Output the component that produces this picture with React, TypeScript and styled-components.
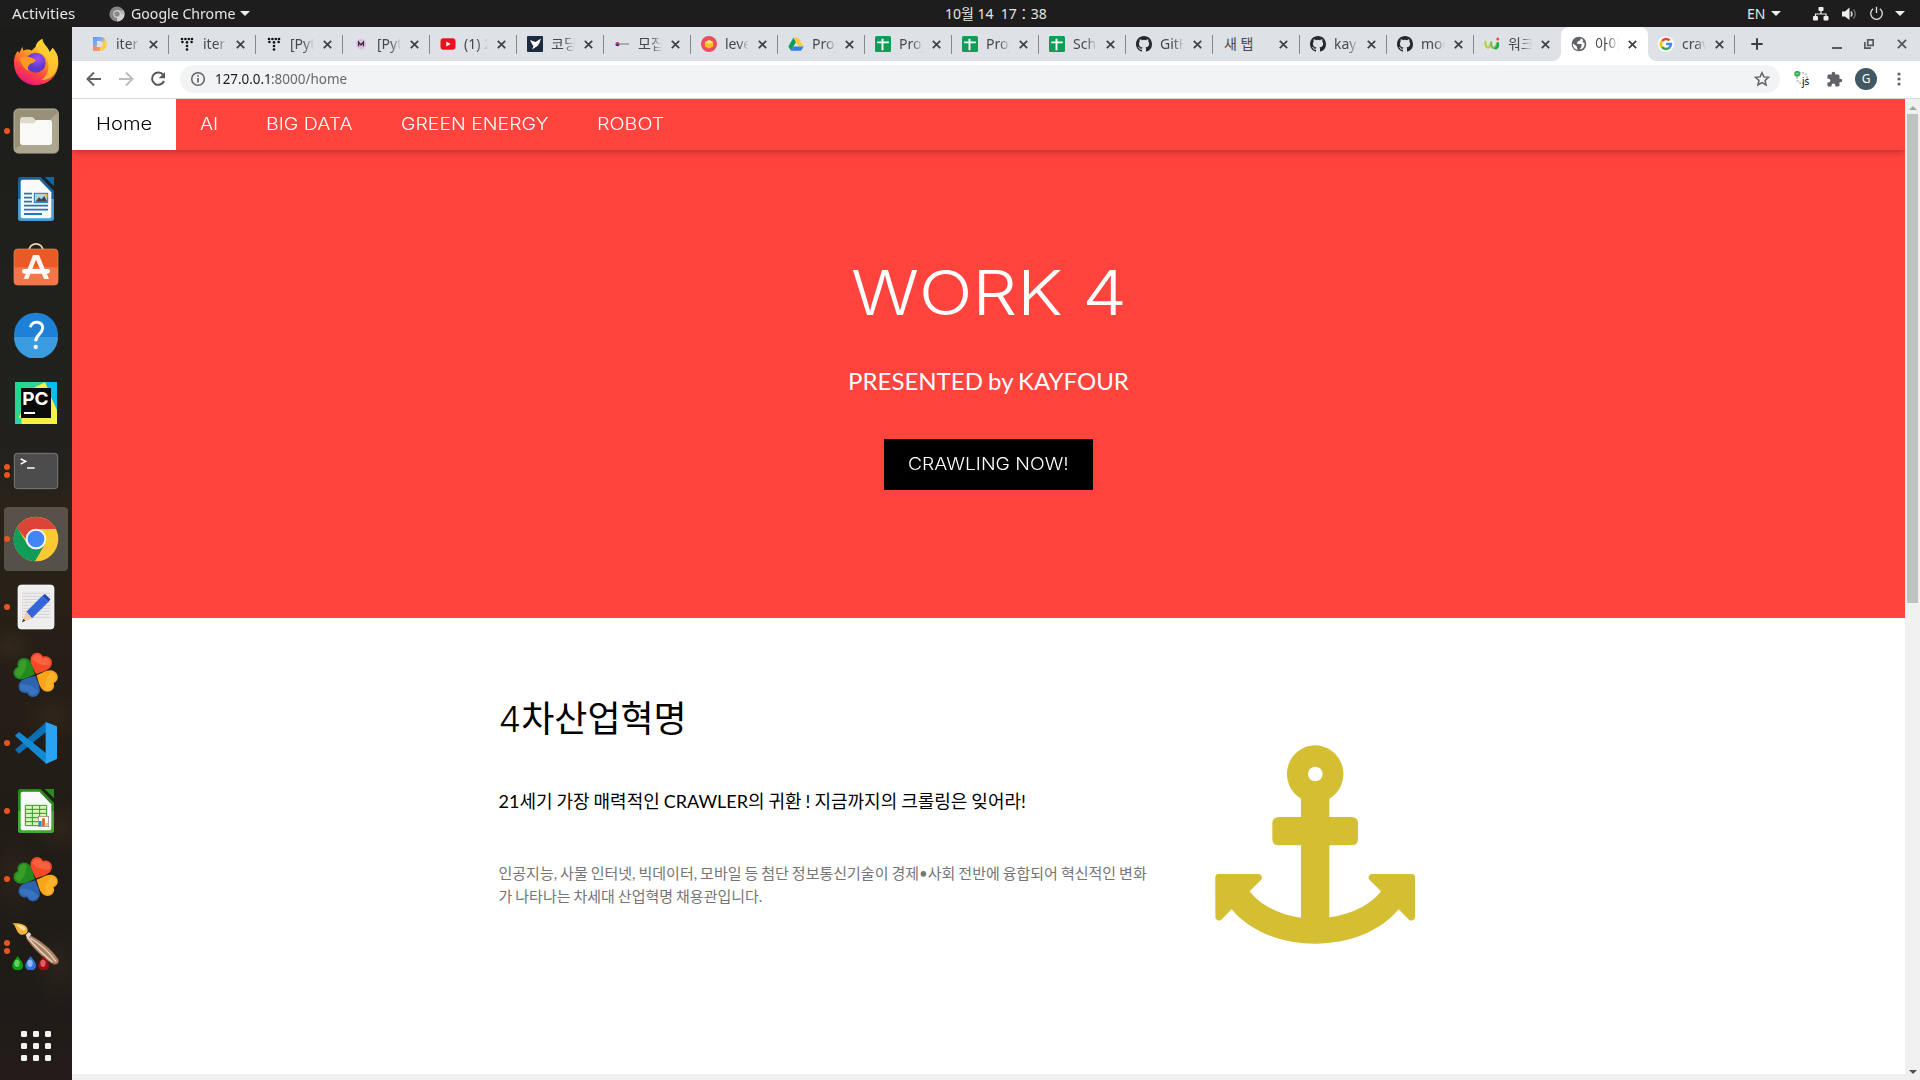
import React, { useLayoutEffect, useRef, useState } from 'react';
import styled, { createGlobalStyle, css } from 'styled-components';

const uiFont = '"Noto Sans", "Open Sans", "Noto Sans CJK KR", sans-serif';
const headFont = 'Inter, "Noto Sans CJK KR", sans-serif';
const bodyFont = 'Lato, "Noto Sans CJK KR", sans-serif';

const GlobalStyle = createGlobalStyle`
  *, *::before, *::after { box-sizing: border-box; }
  body { margin: 0; overflow: hidden; background: #1d1d1d; }
  svg { display: block; flex: none; }
`;

/* ---------- text that keeps a fixed measure ---------- */

const FitBox = styled.span<{ $w: number }>`
  display: inline-block;
  width: ${(p) => p.$w}px;
  white-space: pre;
  text-align: left;
`;
const FitInner = styled.span`
  display: inline-block;
  transform-origin: 0 50%;
`;

function Fit({ w, children }: { w: number; children: React.ReactNode }) {
  const ref = useRef<HTMLSpanElement>(null);
  const [scale, setScale] = useState(1);
  useLayoutEffect(() => {
    if (ref.current) setScale(w / ref.current.offsetWidth);
  }, [w]);
  return (
    <FitBox $w={w}>
      <FitInner ref={ref} style={{ transform: `scaleX(${scale})` }}>{children}</FitInner>
    </FitBox>
  );
}

/* ---------- desktop shell ---------- */

const Desktop = styled.div`
  width: 1920px;
  height: 1080px;
  display: flex;
  flex-direction: column;
  overflow: hidden;
  font-family: ${uiFont};
`;
const TopBar = styled.header`
  height: 27px;
  flex: none;
  display: grid;
  grid-template-columns: 945px 1fr 173px;
  background: #1d1d1d;
  color: #e6e6e6;
  font-size: 14px;
  line-height: 27px;
`;
const TopGroup = styled.div<{ $pad?: number }>`
  display: flex;
  align-items: center;
  padding-left: ${(p) => p.$pad ?? 0}px;
`;
const Gap = styled.span<{ $w: number }>`
  width: ${(p) => p.$w}px;
  flex: none;
`;
const Caret = styled.i`
  border: 5px solid transparent;
  border-top-color: #eee;
  border-bottom: 0;
  width: 10px;
  height: 5px;
`;
const Work = styled.div`
  flex: 1;
  display: flex;
  min-height: 0;
`;
const Dock = styled.aside`
  width: 72px;
  flex: none;
  display: flex;
  flex-direction: column;
  padding-top: 1px;
  background:
    radial-gradient(ellipse 30px 24px at 52px 690px, rgba(88, 66, 40, 0.22), transparent),
    radial-gradient(ellipse 26px 20px at 10px 620px, rgba(92, 70, 45, 0.22), transparent),
    radial-gradient(ellipse 34px 30px at 60px 800px, rgba(70, 54, 36, 0.35), transparent),
    radial-gradient(ellipse 30px 50px at 14px 850px, rgba(66, 50, 34, 0.3), transparent),
    radial-gradient(ellipse 30px 40px at 60px 940px, rgba(66, 52, 38, 0.3), transparent),
    linear-gradient(#1c1c1b 0, #20201c 250px, #22211d 430px, #2a231a 480px, #261f17 620px, #211c16 800px, #1f1b17 960px, #241c1a 100%);
`;
const DockSlot = styled.div<{ $last?: boolean }>`
  height: 68px;
  flex: none;
  padding: 3px 4px 1px;
  ${(p) => p.$last && css`margin-top: 32px;`}
`;
const DockTile = styled.div<{ $active?: boolean }>`
  height: 64px;
  border-radius: 4px;
  display: flex;
  align-items: center;
  padding-bottom: 2px;
  background: ${(p) => (p.$active ? 'rgba(255,255,255,.21)' : 'transparent')};
`;
const Dots = styled.div`
  width: 8px;
  display: flex;
  flex-direction: column;
  gap: 2.5px;
  padding-top: 2px;
`;
const Dot = styled.i`
  width: 6px;
  height: 6px;
  border-radius: 50%;
  background: #e95420;
`;

/* ---------- browser chrome ---------- */

const Browser = styled.div`
  flex: 1;
  min-width: 0;
  display: flex;
  flex-direction: column;
  background: #fff;
`;
const TabStrip = styled.div`
  height: 34px;
  flex: none;
  display: flex;
  padding-left: 10px;
  background: #dee1e6;
  color: #45494d;
`;
const Tab = styled.div<{ $active?: boolean; $bare?: boolean; $sep?: boolean }>`
  width: 87px;
  flex: none;
  display: flex;
  align-items: center;
  padding-left: ${(p) => (p.$bare ? 11 : 10)}px;
  position: relative;
  ${(p) => p.$sep && css`
    background: linear-gradient(#85888d, #85888d) 86px 8px / 1px 19px no-repeat;
  `}
  ${(p) => p.$active && css`
    background: #fff;
    border-radius: 8px 8px 0 0;
    &::before, &::after {
      content: '';
      position: absolute;
      bottom: 0;
      width: 8px;
      height: 8px;
    }
    &::before { left: -8px; background: radial-gradient(circle at 0 0, transparent 7.5px, #fff 8px); }
    &::after { right: -8px; background: radial-gradient(circle at 100% 0, transparent 7.5px, #fff 8px); }
  `}
`;
const TabTitle = styled.span<{ $wide?: boolean }>`
  width: ${(p) => (p.$wide ? 46 : 24)}px;
  margin-left: ${(p) => (p.$wide ? 0 : 8)}px;
  overflow: hidden;
  white-space: nowrap;
  font-size: 14px;
  line-height: 24px;
  ${(p) => !p.$wide && css`mask-image: linear-gradient(90deg, #000 55%, transparent);`}
`;
const TabClose = styled.span`
  margin-left: 8.5px;
`;
const StripButtons = styled.div`
  display: flex;
  align-items: center;
  padding-left: 16px;
`;
const Toolbar = styled.div`
  height: 38px;
  flex: none;
  display: flex;
  align-items: center;
  padding: 0 13px 1px 13px;
  border-bottom: 1px solid #d6d8db;
  background: #fff;
`;
const Omnibox = styled.div`
  width: 1600px;
  height: 28px;
  margin-left: 13px;
  border-radius: 14px;
  background: #f1f3f4;
  display: flex;
  align-items: center;
  padding: 0 9px;
  font-size: 14px;
  line-height: 28px;
  color: #202124;
`;
const UrlRest = styled.span`
  color: #65696e;
`;
const Push = styled.span`
  flex: 1;
`;
const Avatar = styled.div`
  width: 22px;
  height: 22px;
  border-radius: 50%;
  background: #405965;
  color: #fff;
  font-size: 12px;
  line-height: 22px;
  text-align: center;
`;

/* ---------- page ---------- */

const Viewport = styled.div`
  flex: 1;
  min-height: 0;
  display: flex;
  align-items: flex-start;
  background: #f0f0f0;
`;
const Page = styled.main`
  width: 1833px;
  height: 975px;
  flex: none;
  background: #fff;
  overflow: hidden;
  font-family: ${bodyFont};
  font-size: 15px;
  line-height: 1.5;
  color: #000;
`;
const Scrollbar = styled.div`
  width: 15px;
  height: 981px;
  flex: none;
  display: flex;
  flex-direction: column;
  align-items: center;
  padding-top: 7px;
  background: #f0f0f0;
`;
const ArrowUp = styled.i`
  border: 4px solid transparent;
  border-bottom-color: #a3a3a3;
  border-top: 0;
`;
const ArrowDown = styled.i`
  border: 4px solid transparent;
  border-top-color: #505050;
  border-bottom: 0;
  margin-top: auto;
  margin-bottom: 6px;
`;
const Thumb = styled.div`
  width: 11px;
  height: 489px;
  margin-top: 4px;
  background: #c1c1c1;
`;
const Nav = styled.nav`
  height: 51px;
  display: flex;
  position: relative;
  background: #ff443e;
  box-shadow: 0 2px 5px rgba(0, 0, 0, 0.16), 0 2px 10px rgba(0, 0, 0, 0.12);
`;
const NavItem = styled.a<{ $current?: boolean }>`
  padding: 11px 24px 13px;
  font-family: ${headFont};
  font-size: 17.3px;
  line-height: 27px;
  height: 51px;
  color: ${(p) => (p.$current ? '#000' : '#fff')};
  background: ${(p) => (p.$current ? '#fff' : 'transparent')};
  font-weight: 350;
`;
const Hero = styled.section`
  height: 468px;
  padding-top: 95px;
  background: #ff443e;
  color: #fff;
  text-align: center;
`;
const HeroTitle = styled.h1`
  margin: 0 0 22px;
  font: 350 62px/96px ${headFont};
`;
const HeroLead = styled.p`
  margin: 0 0 40px;
  font-size: 24px;
  line-height: 36px;
  word-spacing: -1px;
`;
const HeroButton = styled.button`
  display: inline-block;
  height: 51px;
  width: 209px;
  padding: 11px 24px 13px;
  border: 0;
  background: #000;
  color: #fff;
  font: 350 17.3px/27px ${headFont};
`;
const Section = styled.section`
  padding: 64px 0;
`;
const Content = styled.div`
  width: 980px;
  margin: 0 auto;
  display: flex;
`;
const Article = styled.div`
  width: 653px;
`;
const Title = styled.h1`
  margin: 10px 0;
  font: 400 36px/54px ${headFont};
`;
const TitleDigit = styled.span`
  font-weight: 300;
`;
const Subtitle = styled.h5`
  margin: 10px 0 15px;
  padding: 32px 0;
  font-weight: 400;
  font-size: 18px;
  line-height: 27px;
  word-spacing: -0.65px;
`;
const Summary = styled.p`
  margin: 0;
  color: #757575;
  word-spacing: -0.85px;
`;
const Figure = styled.div`
  flex: 1;
  padding: 63px 0 0 63.5px;
`;

/* ---------- icons ---------- */

const Cross = ({ size = 9, color = '#3c4043' }) => (
  <svg width={size} height={size} viewBox="0 0 9 9" fill="none" stroke={color} strokeWidth="1.7"><path d="M.8.8l7.4 7.4M8.2.8L.8 8.2" /></svg>
);

const Tistory = () => (
  <svg width="16" height="16" viewBox="0 0 16 16" fill="#111">
    {[[3, 3], [6.4, 3], [9.8, 3], [13, 3], [3.4, 6], [8, 6.4], [12.6, 6], [8, 10], [8, 13.5]].map(([x, y]) => <circle key={`${x}-${y}`} cx={x} cy={y} r="1.3" />)}
  </svg>
);
const Sheets = () => (
  <svg width="16" height="16" viewBox="0 0 16 16"><rect width="16" height="16" rx="1.5" fill="#0f9d58" /><path d="M7.5 2.7v11.5M2.2 6.4h11.6" stroke="#fff" strokeWidth="1.9" /></svg>
);
const Github = () => (
  <svg width="16" height="16" viewBox="0 0 16 16" fill="#24292e"><path d="M8 0C3.58 0 0 3.58 0 8c0 3.54 2.29 6.53 5.47 7.59.4.07.55-.17.55-.38 0-.19-.01-.82-.01-1.49-2.01.37-2.53-.49-2.69-.94-.09-.23-.48-.94-.82-1.13-.28-.15-.68-.52-.01-.53.63-.01 1.08.58 1.23.82.72 1.21 1.87.87 2.33.66.07-.52.28-.87.51-1.07-1.78-.2-3.64-.89-3.64-3.95 0-.87.31-1.59.82-2.15-.08-.2-.36-1.02.08-2.12 0 0 .67-.21 2.2.82a7.6 7.6 0 014 0c1.53-1.04 2.2-.82 2.2-.82.44 1.1.16 1.92.08 2.12.51.56.82 1.27.82 2.15 0 3.07-1.87 3.75-3.65 3.95.29.25.54.73.54 1.48 0 1.07-.01 1.93-.01 2.2 0 .21.15.46.55.38A8.01 8.01 0 0016 8c0-4.42-3.58-8-8-8z" /></svg>
);

const favicons: Record<string, React.ReactNode> = {
  d: <svg width="16" height="16" viewBox="0 0 16 16"><defs><linearGradient id="dg" x2="1" y2="1"><stop stopColor="#4f9cf5" /><stop offset=".4" stopColor="#8fa8e8" /><stop offset=".6" stopColor="#ffcf4a" /><stop offset="1" stopColor="#f3d33c" /></linearGradient></defs><path d="M1 1h7c9 0 9 14 0 14H1l4-4h3c3.500 0 3.500-6 0-6H5v6l-4 4z" fill="url(#dg)" /><path d="M1 15V9l4 2h3v4z" fill="#f68a5c" opacity=".8" /></svg>,
  t: <Tistory />,
  m: <svg width="16" height="16" viewBox="0 0 16 16"><circle cx="8" cy="8" r="5.2" fill="#e0bce5" /><path d="M5.600 10.200V6L8 9l2.400-3v4.200" fill="none" stroke="#333" strokeWidth="1.300" /></svg>,
  yt: <svg width="16" height="16" viewBox="0 0 16 16"><rect x=".5" y="2.300" width="15" height="11.400" rx="3" fill="#f00f1e" /><path d="M6.300 5.500v5L10.600 8z" fill="#fff" /></svg>,
  code: <svg width="16" height="16" viewBox="0 0 16 16"><rect width="16" height="16" rx="1" fill="#1c2b40" /><path d="M3 4l4 1.500 1.500.5L14 2.500 12.500 7l-2 3L5 13.500 6.500 10 5 8z" fill="#fff" /></svg>,
  flag: <svg width="16" height="16" viewBox="0 0 16 16"><circle cx="3.500" cy="8" r="2" fill="#c8345b" /><path d="M1.500 8a2 2 0 004 .5z" fill="#2a3d8f" /><path d="M5 8h10" stroke="#888" strokeWidth="1.200" /></svg>,
  lv: <svg width="16" height="16" viewBox="0 0 16 16"><circle cx="8" cy="8" r="8" fill="#ec4c62" /><path d="M3.800 6.200L8 4l4.200 2v4.500L8 12.500l-4.200-2z" fill="#ffbe1f" /><path d="M3.800 6.200L8 4l4.200 2L8 8z" fill="#ffe28a" /></svg>,
  drive: <svg width="16" height="16" viewBox="0 0 16 16"><path d="M5.500 1.500L.3 10.600 3 14.800 8 6z" fill="#0f9d58" /><path d="M5.500 1.500h5l5.200 9h-5z" fill="#ffcd40" /><path d="M5.500 10.500h10.200L13 14.800H3z" fill="#2f80ed" /></svg>,
  s: <Sheets />,
  gh: <Github />,
  wi: <svg width="16" height="16" viewBox="0 0 18 16" fill="none" strokeLinecap="round" strokeWidth="2.500"><path d="M1.500 5.500C2 14 6 14 8 6.500" stroke="#b3d335" /><path d="M8 6.500C8 14 13 14 15 7.500" stroke="#7ac143" /><path d="M15.500 7c.8 3 0 5-2.500 6" stroke="#16a551" /><circle cx="15.500" cy="2.300" r="1.700" fill="#f04e30" /></svg>,
  globe: <svg width="16" height="16" viewBox="0 0 16 16"><circle cx="8" cy="8" r="7.300" fill="#5f6368" /><path d="M9.500 2c1 2-1 3-3 3.500L6 8h4.500v2.500L8.700 13.500C12 13 14 10.500 13.500 7l-2-1 .8-2zM1.900 7.500L5.500 10l1.200 3.800C3.500 13 1.500 11 1.900 7.500z" fill="#fff" /></svg>,
  g: <svg width="16" height="16" viewBox="0 0 16 16"><circle cx="8" cy="8" r="8" fill="#fff" /><g fill="none" strokeWidth="2.500"><path d="M4 4.900A5 5 0 0111.600 4.400" stroke="#ea4335" /><path d="M4 4.900a5 5 0 000 6.200" stroke="#fbbc05" /><path d="M4 11.100a5 5 0 007.400.6" stroke="#34a853" /><path d="M11.400 11.700A5 5 0 0013 8.100H8.200" stroke="#4285f4" /></g></svg>,
};

const tabs: { icon?: string; title: string; active?: boolean }[] = [
  { icon: 'd', title: 'iter' }, { icon: 't', title: 'iter' }, { icon: 't', title: '[Pyt' }, { icon: 'm', title: '[Pyt' },
  { icon: 'yt', title: '(1) 2' }, { icon: 'code', title: '코딩' }, { icon: 'flag', title: '모집' }, { icon: 'lv', title: 'leve' },
  { icon: 'drive', title: 'Proj' }, { icon: 's', title: 'Proj' }, { icon: 's', title: 'Proj' }, { icon: 's', title: 'Sch' },
  { icon: 'gh', title: 'GitH' }, { title: '새 탭' }, { icon: 'gh', title: 'kay' }, { icon: 'gh', title: 'moo' },
  { icon: 'wi', title: '워크' }, { icon: 'globe', title: '아이', active: true }, { icon: 'g', title: 'craw' },
];

const Clover = ({ cy }: { cy: number }) => (
  <g transform={`translate(107 ${cy}) scale(.97)`}>
    {[['#f5492a', '#ff8a63', 22], ['#f9a51a', '#ffc84d', 114], ['#2c62ae', '#4c8fdc', 206], ['#238a1d', '#5bb83f', 295]].map(([a, b, r]) => (
      <g key={r} transform={`rotate(${r})`}>
        <path d="M0 -3C-14 -16 -35 -29 -34 -47C-33 -64 -14 -74 0 -61C14 -74 33 -64 34 -47C35 -29 14 -16 0 -3Z" fill={a as string} />
        <path d="M-29 -42C-29 -62 -12 -67 0 -55C12 -67 29 -60 29 -46C12 -34 -10 -34 -29 -42Z" fill={b as string} opacity=".4" />
      </g>
    ))}
  </g>
);

const DocShape = ({ y, dark, light }: { y: number; dark: string; light: string }) => (
  <>
    <path d={`M62 ${y}H122L162 ${y + 42}V${y + 124}Q162 ${y + 132} 153 ${y + 132}H62Q54 ${y + 132} 54 ${y + 124}V${y + 8}Q54 ${y} 62 ${y}Z`} fill={dark} />
    <path d={`M54 ${y + 66}H162V${y + 124}Q162 ${y + 132} 153 ${y + 132}H62Q54 ${y + 132} 54 ${y + 124}Z`} fill={light} />
    <path d={`M68 ${y + 8}H118L154 ${y + 46}V${y + 118}Q154 ${y + 124} 148 ${y + 124}H68Q62 ${y + 124} 62 ${y + 118}V${y + 14}Q62 ${y + 8} 68 ${y + 8}Z`} fill="#fafafa" />
    <path d={`M134 ${y}H162V${y + 28}Z`} fill={dark} />
  </>
);

type AppEntry = { cy: number; dots: number; active?: boolean; art: React.ReactNode };
const apps: AppEntry[] = [
  { cy: 126, dots: 0, art: (
    <>
      <defs>
        <linearGradient id="ff" x1=".8" y1="0" x2=".3" y2="1"><stop stopColor="#fff44f" /><stop offset=".4" stopColor="#ffa321" /><stop offset=".7" stopColor="#ff4b3e" /><stop offset="1" stopColor="#e8127c" /></linearGradient>
        <radialGradient id="fp" cx=".6" cy=".3"><stop stopColor="#a44cf5" /><stop offset="1" stopColor="#5b3bc4" /></radialGradient>
      </defs>
      <path d="M42 128C42 108 50 96 54 93L58 99L67 80L70 92C77 88 88 87 94 92L107 80C110 66 120 60 127 57C130 76 145 80 149 97L158 84C169 96 176 110 175 129C174 168 145 195 108 195C72 195 42 168 42 128Z" fill="url(#ff)" />
      <path d="M127 57C130 76 145 80 149 97L158 84C169 96 176 110 174 133C169 165 148 181 123 180C143 168 150 145 143 122C138 104 114 96 107 82C110 67 120 60 127 57Z" fill="#ffce2f" opacity=".8" />
      <circle cx="107" cy="128" r="30" fill="url(#fp)" />
      <path d="M58 116C70 107 89 110 103 117C110 122 105 128 91 131C83 138 82 145 86 153C68 146 65 127 58 116Z" fill="#ff9922" />
    </>) },
  { cy: 330, dots: 1, art: (
    <>
      <rect x="42" y="267" width="133" height="132" rx="13" fill="#999078" stroke="#bcb6a1" strokeWidth="3" />
      <path d="M43 390L173 278V388Q173 397 163 397H53Q43 397 43 390Z" fill="#aea78f" />
      <path d="M60 300Q60 291 68 291H96Q101 291 106 300H148Q156 300 156 309V325H60Z" fill="#ddd9cb" />
      <path d="M60 310H101L110 300H148Q156 300 156 309V367Q156 375 148 375H68Q60 375 60 367Z" fill="#f9f9f8" />
    </>) },
  { cy: 534, dots: 0, art: (
    <>
      <DocShape y={471} dark="#19639b" light="#449ed1" />
      <path d="M72 521H96M72 533H96M72 545H96M72 557H144M72 569H144M72 582H126" stroke="#1c7ab8" strokeWidth="5.500" />
      <rect x="103" y="520" width="40" height="28" fill="#a7d7ef" stroke="#1c7ab8" strokeWidth="3" />
      <path d="M106 545L117 532L124 538L133 528L142 545Z" fill="#454545" /><path d="M131 522H142V533Z" fill="#ffb72b" />
    </>) },
  { cy: 738, dots: 0, art: (
    <>
      <path d="M87 694C87 664 129 664 129 694" fill="none" stroke="#e9d7a6" strokeWidth="5" />
      <rect x="42" y="687" width="132" height="108" rx="11" fill="#ea5a26" stroke="#f4885c" strokeWidth="2" />
      <path d="M42 742H174V786Q174 795 164 795H52Q42 795 42 786Z" fill="#f2764a" />
      <path d="M99 705H117L147 777H132L108 719L85 777H71Z" fill="#fff5ee" /><rect x="66" y="747" width="84" height="14" rx="7" fill="#fff" />
    </>) },
  { cy: 942, dots: 0, art: (
    <>
      <circle cx="108" cy="944" r="66" fill="#1f80d8" /><path d="M42 951H174A66 66 0 0142 951Z" fill="#3c9ce2" />
      <path d="M91 922C95 899 131 904 128 925C126 942 107 944 107 964" fill="none" stroke="#fff" strokeWidth="9" /><circle cx="107" cy="981" r="6.500" fill="#fff" />
    </>) },
  { cy: 126, dots: 0, art: (
    <>
      <defs><linearGradient id="pc"><stop stopColor="#22d88f" /><stop offset=".5" stopColor="#35d394" /><stop offset="1" stopColor="#16bde6" /></linearGradient></defs>
      <rect x="45" y="66" width="126" height="126" fill="url(#pc)" /><path d="M45 192L105 82L135 66L171 148V192Z" fill="#f5f04a" /><path d="M138 66H171V150L146 96Z" fill="#08bfe9" /><path d="M45 170L64 174V192H45Z" fill="#25d7a0" />
      <rect x="63" y="84" width="90" height="90" fill="#0b0b0b" />
      <text x="67" y="135" fontFamily="Inter, sans-serif" fontWeight="700" fontSize="54" textLength="79" lengthAdjust="spacingAndGlyphs" fill="#fff">PC</text><rect x="72" y="156" width="33" height="6" fill="#fff" />
    </>) },
  { cy: 330, dots: 2, art: (
    <>
      <rect x="43" y="280" width="130" height="106" rx="9" fill="#4c4c4c" stroke="#7b7b7b" strokeWidth="3" />
      <path d="M62 297L77 304L62 312" fill="none" stroke="#fff" strokeWidth="4.500" /><path d="M81 324H104" stroke="#fff" strokeWidth="4.500" />
    </>) },
  { cy: 534, dots: 1, active: true, art: (
    <>
      <circle cx="108" cy="537" r="67" fill="#fcc934" />
      <path d="M50 504A67 67 0 01168 507H108A30 30 0 0078 537Z" fill="#db4437" />
      <path d="M51 502A67 67 0 00105 604L135 552A31 31 0 0181 552Z" fill="#0f9d58" />
      <circle cx="108" cy="537" r="31" fill="#f1f3f6" /><circle cx="108" cy="537" r="25" fill="#4285f4" />
    </>) },
  { cy: 738, dots: 1, art: (
    <>
      <rect x="54" y="675" width="108" height="132" rx="10" fill="#eee" stroke="#fff" strokeWidth="2" />
      <path d="M66 700H151M66 709H151M66 718H151M66 727H151M66 736H151M66 745H151M66 754H151M66 763H151M66 772H151" stroke="#c5c5c5" strokeWidth="2" />
      <path d="M127 707L135 702L151 718L145 726Z" fill="#1c46bd" /><path d="M127 707L145 726L96 775L79 755Z" fill="#3566d8" /><path d="M79 755L96 775L67 786Z" fill="#f2c9a5" /><path d="M70 776L76 782L66 787Z" fill="#333" />
    </>) },
  { cy: 942, dots: 0, art: <Clover cy={945} /> },
  { cy: 96, dots: 1, art: (
    <>
      <path d="M45 119L57 131L139 65V36Z" fill="#0a6fb5" /><path d="M45 77L57 66L139 130V162Z" fill="#1389d6" />
      <path d="M137 36L171 49V147L137 162Z" fill="#29a4f2" />
    </>) },
  { cy: 300, dots: 1, art: (
    <>
      <DocShape y={237} dark="#2b8a1d" light="#43a832" />
      <rect x="76" y="286" width="64" height="61" fill="#d4f7c0" /><path d="M76 286H140V347H76ZM97 286V347M119 286V347M76 298H140M76 310H140M76 323H140M76 335H140" fill="none" stroke="#2d9a20" strokeWidth="3" />
      <rect x="115" y="319" width="31" height="31" fill="#fff" stroke="#777" strokeWidth="2" /><path d="M121 348V333" stroke="#168fd6" strokeWidth="8" /><path d="M130.500 348V325" stroke="#d8621a" strokeWidth="8" /><path d="M140 348V339" stroke="#fcc336" strokeWidth="7" />
    </>) },
  { cy: 504, dots: 1, art: <Clover cy={508} /> },
  { cy: 708, dots: 2, art: (
    <>
      <path d="M84 673C112 684 155 716 175 748C181 763 165 768 151 758C126 742 91 705 78 684Z" fill="#a98467" stroke="#5a3b28" strokeWidth="2" />
      <path d="M90 684C118 700 148 726 168 755M84 684C105 708 130 735 158 756" fill="none" stroke="#e6d4c2" strokeWidth="4" />
      <path d="M77 675L86 666L94 673L83 687Z" fill="#ded5cd" /><path d="M37 639C58 640 75 641 82 655C86 670 76 676 63 674C48 668 49 648 37 639Z" fill="#f3b340" /><path d="M48 644C62 644 76 648 76 660C66 664 59 652 48 644Z" fill="#fce1a0" />
      {[['#0f9b18', '#8ef07f', 53], ['#3471db', '#c2e0ff', 92], ['#a00a12', '#ff8d8d', 131]].map(([a, b, x]) => (
        <g key={x} transform={`translate(${x} 738)`}><path d="M0 0C4 8 16 17 16 29C16 48 -16 48 -16 29C-16 17 -4 8 0 0Z" fill={a as string} /><ellipse cx="-2" cy="22" rx="8" ry="11" fill={b as string} opacity=".65" /></g>
      ))}
    </>) },
];

const GridArt = () => (
  <>{[963, 999, 1035].map((y) => [63, 99, 135].map((x) => <rect key={`${x}-${y}`} x={x} y={y} width="18" height="18" rx="4" fill="#f2f2f2" />))}</>
);

const DockIcon = ({ cy, children }: { cy: number; children: React.ReactNode }) => (
  <svg width="48" height="48" viewBox={`36 ${cy - 72} 144 144`}>{children}</svg>
);

const Anchor = () => (
  <svg width="200" height="200" viewBox="75 75 600 600" fill="#d4be32">
    <path fillRule="evenodd" d="M376 76A86 86 0 01418 236V291H484Q504 291 504 311V356Q504 376 484 376H418V592C482 584 542 555 573 514L539 480C532 473 537 462 546 462H665Q675 462 675 472V591C675 600 664 605 657 599L626 568C570 636 474 671 375 671C276 671 181 636 125 568L94 599C87 605 76 600 76 591V472Q76 462 86 462H205C215 462 219 473 213 480L179 514C210 555 269 585 333 593V376H267Q247 376 247 356V311Q247 291 267 291H333V236A86 86 0 01376 76ZM376 140A22 22 0 10376 184A22 22 0 10376 140Z" />
  </svg>
);

/* ---------- screen ---------- */

const menu: [string, number][] = [['Home', 56], ['AI', 18], ['BIG DATA', 87], ['GREEN ENERGY', 147.5], ['ROBOT', 67.5]];

export default function App() {
  return (
    <Desktop>
      <GlobalStyle />
      <TopBar>
        <TopGroup $pad={12}>
          <Fit w={63}>Activities</Fit>
          <Gap $w={34} />
          <svg width="16" height="16" viewBox="0 0 16 16"><circle cx="8" cy="8" r="7.600" fill="#858585" /><path d="M8 8h7.600A7.600 7.600 0 018 15.600z" fill="#cfcfcf" /><path d="M8 4.600h6.800a7.600 7.600 0 01.8 3.400H8z" fill="#b5b5b5" /><circle cx="8" cy="8" r="3.700" fill="#ddd" /><circle cx="8" cy="8" r="2.700" fill="#888" /></svg>
          <Gap $w={6} />
          <Fit w={104}>Google Chrome</Fit>
          <Gap $w={5} />
          <Caret />
        </TopGroup>
        <TopGroup><Fit w={102}>10월 14  17：38</Fit></TopGroup>
        <TopGroup>
          <Fit w={18}>EN</Fit>
          <Gap $w={6} />
          <Caret />
          <Gap $w={32} />
          <svg width="16" height="14" viewBox="0 0 16 14" fill="#eee"><rect x="5.500" width="5" height="4" rx=".7" /><rect y="9" width="5" height="4.500" rx="1" /><rect x="10.500" y="9" width="5" height="4.500" rx="1" /><path d="M8 3v4M2.500 9.500V7h10.500v2.500" fill="none" stroke="#eee" strokeWidth="1.200" /></svg>
          <Gap $w={13} />
          <svg width="16" height="14" viewBox="0 0 16 14"><path d="M0 4.500h3L7.500.5v12.500L3 9.500H0z" fill="#eee" /><path d="M9 4.500q1.800 2.500 0 5" fill="none" stroke="#ddd" strokeWidth="1.500" /><path d="M11.500 2.500q3.500 4.500 0 9" fill="none" stroke="#777" strokeWidth="1.300" /></svg>
          <Gap $w={11} />
          <svg width="15" height="15" viewBox="0 0 15 15" fill="none" stroke="#e6e6e6" strokeWidth="1.300"><path d="M4.200 2.800a5.800 5.800 0 106.600 0M7.500.8V7" /></svg>
          <Gap $w={11} />
          <Caret />
        </TopGroup>
      </TopBar>
      <Work>
        <Dock>
          {apps.map((a, i) => (
            <DockSlot key={i}>
              <DockTile $active={a.active}>
                <Dots>{Array.from({ length: a.dots }, (_, k) => <Dot key={k} />)}</Dots>
                <DockIcon cy={a.cy}>{a.art}</DockIcon>
              </DockTile>
            </DockSlot>
          ))}
          <DockSlot $last>
            <DockTile><Dots /><DockIcon cy={1008}><GridArt /></DockIcon></DockTile>
          </DockSlot>
        </Dock>
        <Browser>
          <TabStrip>
            {tabs.map((t, i) => (
              <Tab key={i} $active={t.active} $bare={!t.icon} $sep={!t.active && i !== 16}>
                {t.icon && favicons[t.icon]}
                <TabTitle $wide={!t.icon}>{t.title}</TabTitle>
                <TabClose><Cross /></TabClose>
              </Tab>
            ))}
            <StripButtons>
              <svg width="12" height="12" viewBox="0 0 12 12" stroke="#3c4043" strokeWidth="2"><path d="M6 .3v11.400M.3 6h11.400" /></svg>
              <Gap $w={69} />
              <svg width="10" height="10" viewBox="0 0 10 10"><path d="M0 9h10" stroke="#55595e" strokeWidth="2" /></svg>
              <Gap $w={22} />
              <svg width="10" height="10" viewBox="0 0 10 10" fill="none" stroke="#55595e" strokeWidth="1.700"><path d="M3.700.8h5.500v5.500H3.700zM.8 3v6.200H7" /></svg>
              <Gap $w={23} />
              <Cross size={10} color="#55595e" />
            </StripButtons>
          </TabStrip>
          <Toolbar>
            <svg width="18" height="18" viewBox="0 0 18 18" fill="none" stroke="#5f6368" strokeWidth="2"><path d="M16 9H3M9 2.500L2.500 9 9 15.500" /></svg>
            <Gap $w={14} />
            <svg width="18" height="18" viewBox="0 0 18 18" fill="none" stroke="#babcbe" strokeWidth="2"><path d="M2 9h13M9 2.500L15.500 9 9 15.500" /></svg>
            <Gap $w={14} />
            <svg width="18" height="18" viewBox="0 0 18 18"><path d="M14.300 5A6.200 6.200 0 1015 11" fill="none" stroke="#55595e" strokeWidth="2" /><path d="M16 2v6.300H9.700z" fill="#55595e" /></svg>
            <Omnibox>
              <svg width="18" height="18" viewBox="0 0 18 18" fill="none" stroke="#5f6368" strokeWidth="1.500"><circle cx="9" cy="9" r="6.300" /><path d="M9 8v4.500M9 5.200v1.600" strokeWidth="1.700" /></svg>
              <Gap $w={7.5} />
              <Fit w={56.5}>127.0.0.1</Fit>
              <UrlRest><Fit w={76}>:8000/home</Fit></UrlRest>
              <Push />
              <svg width="18" height="18" viewBox="0 0 18 18" fill="none" stroke="#5f6368" strokeWidth="1.500"><path d="M9 2.700l1.900 4.200 4.600.4-3.500 3.100 1.100 4.500L9 12.500l-4.100 2.400L6 10.400 2.500 7.300l4.600-.4z" /></svg>
            </Omnibox>
            <Gap $w={14} />
            <svg width="17" height="17" viewBox="0 0 17 17"><circle cx="8" cy="7" r="5.200" fill="#fff" stroke="#c4c4c4" strokeWidth="2" strokeDasharray="2 1" /><circle cx="3.200" cy="2.800" r="3" fill="#35ad55" /><path d="M1.700 2.800h3" stroke="#a8e3b6" /><text x="8" y="14" fontFamily="Noto Sans, sans-serif" fontSize="10" fill="#111">js</text></svg>
            <Gap $w={15} />
            <svg width="17" height="17" viewBox="0 0 24 24" fill="#5f6368"><path d="M20.500 11H19V7c0-1.100-.9-2-2-2h-4V3.500a2.500 2.500 0 00-5 0V5H4c-1.100 0-1.990.9-1.990 2v3.800H3.500a2.700 2.700 0 010 5.400H2V20c0 1.100.9 2 2 2h3.800v-1.500a2.700 2.700 0 015.400 0V22H17c1.100 0 2-.9 2-2v-4h1.500a2.500 2.500 0 000-5z" /></svg>
            <Gap $w={12} />
            <Avatar>G</Avatar>
            <Gap $w={19.5} />
            <svg width="4" height="14" viewBox="0 0 4 14" fill="#5f6368"><circle cx="2" cy="2" r="1.600" /><circle cx="2" cy="7" r="1.600" /><circle cx="2" cy="12" r="1.600" /></svg>
          </Toolbar>
          <Viewport>
            <Page>
              <Nav>
                {menu.map(([label, w], i) => <NavItem key={label} $current={i === 0}><Fit w={w}>{label}</Fit></NavItem>)}
              </Nav>
              <Hero>
                <HeroTitle><Fit w={276}>WORK 4</Fit></HeroTitle>
                <HeroLead>PRESENTED by KAYFOUR</HeroLead>
                <HeroButton><Fit w={161}>CRAWLING NOW!</Fit></HeroButton>
              </Hero>
              <Section>
                <Content>
                  <Article>
                    <Title><TitleDigit>4</TitleDigit>차산업혁명</Title>
                    <Subtitle>21세기 가장 매력적인 CRAWLER의 귀환 ! 지금까지의 크롤링은 잊어라!</Subtitle>
                    <Summary>인공지능, 사물 인터넷, 빅데이터, 모바일 등 첨단 정보통신기술이 경제•사회 전반에 융합되어 혁신적인 변화가 나타나는 차세대 산업혁명 채용관입니다.</Summary>
                  </Article>
                  <Figure><Anchor /></Figure>
                </Content>
              </Section>
            </Page>
            <Scrollbar><ArrowUp /><Thumb /><ArrowDown /></Scrollbar>
          </Viewport>
        </Browser>
      </Work>
    </Desktop>
  );
}
